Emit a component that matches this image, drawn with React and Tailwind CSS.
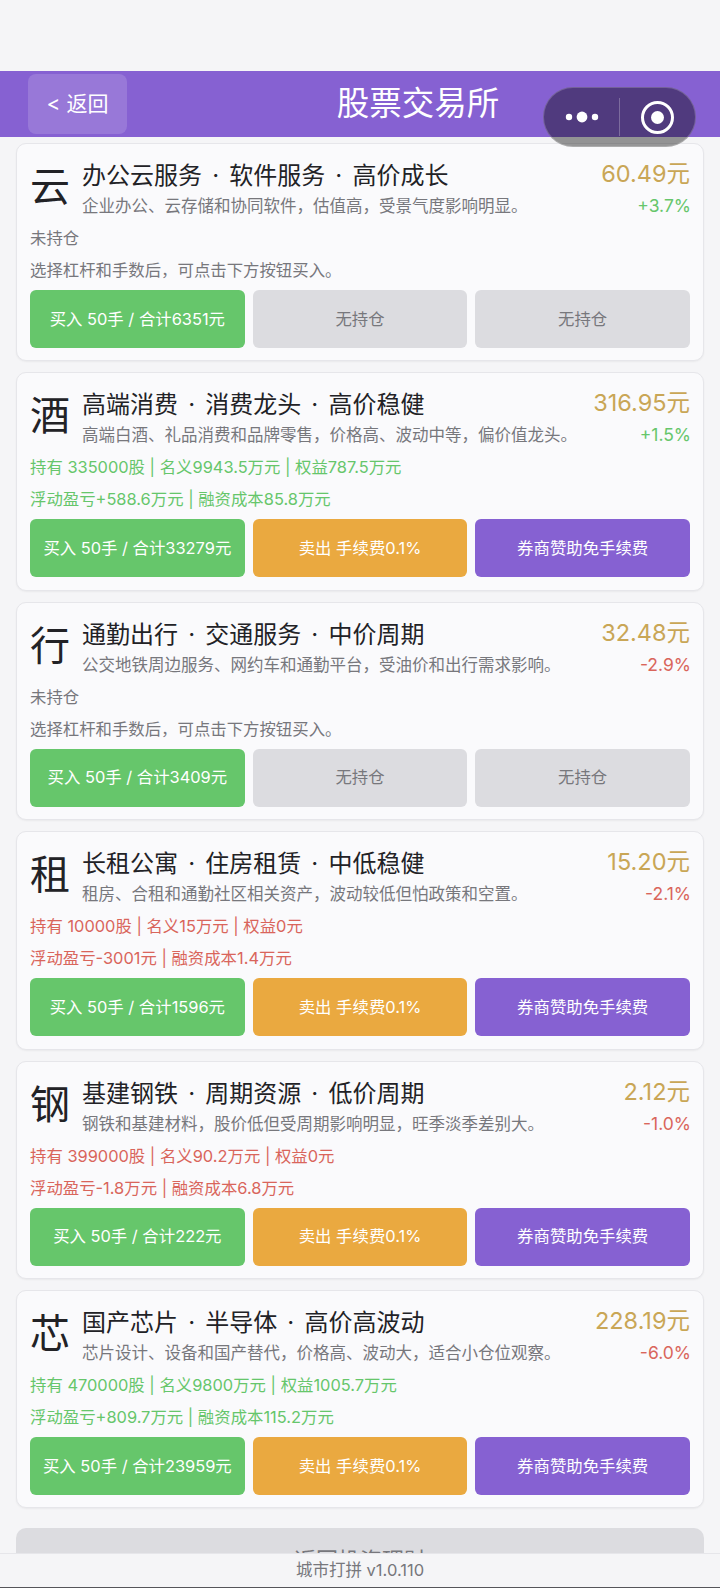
// Stock exchange page: header, stock cards, footer bar

const FONT = "font-['Inter','Noto_Sans_CJK_SC',sans-serif]";

const STOCKS = [
  {
    char: '云',
    title: '办公云服务 · 软件服务 · 高价成长',
    desc: '企业办公、云存储和协同软件，估值高，受景气度影响明显。',
    price: '60.49元',
    pct: '+3.7%',
    up: true,
    buy: '买入 50手 / 合计6351元',
  },
  {
    char: '酒',
    title: '高端消费 · 消费龙头 · 高价稳健',
    desc: '高端白酒、礼品消费和品牌零售，价格高、波动中等，偏价值龙头。',
    price: '316.95元',
    pct: '+1.5%',
    up: true,
    buy: '买入 50手 / 合计33279元',
    hold: ['持有 335000股 | 名义9943.5万元 | 权益787.5万元', '浮动盈亏+588.6万元 | 融资成本85.8万元'],
    gain: true,
  },
  {
    char: '行',
    title: '通勤出行 · 交通服务 · 中价周期',
    desc: '公交地铁周边服务、网约车和通勤平台，受油价和出行需求影响。',
    price: '32.48元',
    pct: '-2.9%',
    up: false,
    buy: '买入 50手 / 合计3409元',
  },
  {
    char: '租',
    title: '长租公寓 · 住房租赁 · 中低稳健',
    desc: '租房、合租和通勤社区相关资产，波动较低但怕政策和空置。',
    price: '15.20元',
    pct: '-2.1%',
    up: false,
    buy: '买入 50手 / 合计1596元',
    hold: ['持有 10000股 | 名义15万元 | 权益0元', '浮动盈亏-3001元 | 融资成本1.4万元'],
    gain: false,
  },
  {
    char: '钢',
    title: '基建钢铁 · 周期资源 · 低价周期',
    desc: '钢铁和基建材料，股价低但受周期影响明显，旺季淡季差别大。',
    price: '2.12元',
    pct: '-1.0%',
    up: false,
    buy: '买入 50手 / 合计222元',
    hold: ['持有 399000股 | 名义90.2万元 | 权益0元', '浮动盈亏-1.8万元 | 融资成本6.8万元'],
    gain: false,
  },
  {
    char: '芯',
    title: '国产芯片 · 半导体 · 高价高波动',
    desc: '芯片设计、设备和国产替代，价格高、波动大，适合小仓位观察。',
    price: '228.19元',
    pct: '-6.0%',
    up: false,
    buy: '买入 50手 / 合计23959元',
    hold: ['持有 470000股 | 名义9800万元 | 权益1005.7万元', '浮动盈亏+809.7万元 | 融资成本115.2万元'],
    gain: true,
  },
];

function ActionButton({ className, children }) {
  return (
    <div className={`h-[58px] flex-1 rounded-[6px] flex items-center justify-center text-[16.4px] ${className}`}>
      {children}
    </div>
  );
}

function StockCard({ stock }) {
  const holding = Boolean(stock.hold);
  const lines = holding
    ? stock.hold
    : ['未持仓', '选择杠杆和手数后，可点击下方按钮买入。'];
  const lineColor = !holding ? 'text-[#77777c]' : stock.gain ? 'text-[#66c66b]' : 'text-[#d9655b]';

  return (
    <div className="h-[218.4px] rounded-[10px] border border-[#e6e6ea] bg-[#fafafc] px-[13px] pt-[15px] shadow-[0_1px_2px_rgba(0,0,0,0.05)]">
      <div className="flex h-[63px]">
        <div className="w-[52px] shrink-0 text-[40px] leading-[56px] text-[#222226]">{stock.char}</div>
        <div className="min-w-0 flex-1">
          <div className="text-[24px] leading-[34px] text-[#222226] [word-spacing:3.4px]">{stock.title}</div>
          <div className="text-[16.5px] leading-[26px] text-[#77777c] whitespace-nowrap">{stock.desc}</div>
        </div>
        <div className="shrink-0 text-right">
          <div className="pb-[4px] text-[23.5px] leading-[30px] text-[#c9a656]">{stock.price}</div>
          <div className={`-mr-px text-[17.5px] leading-[26px] ${stock.up ? 'text-[#66c66b]' : 'text-[#d9655b]'}`}>{stock.pct}</div>
        </div>
      </div>
      <div className={`text-[16.4px] leading-[32px] ${lineColor}`}>
        {lines.map((line) => (
          <div key={line}>{line}</div>
        ))}
      </div>
      <div className="mt-[4px] flex gap-[8px]">
        <ActionButton className="bg-[#66c66b] text-white">{stock.buy}</ActionButton>
        {holding ? (
          <>
            <ActionButton className="bg-[#eaa940] text-white">卖出 手续费0.1%</ActionButton>
            <ActionButton className="bg-[#8661d2] text-white">券商赞助免手续费</ActionButton>
          </>
        ) : (
          <>
            <ActionButton className="bg-[#dcdce0] text-[#77777c]">无持仓</ActionButton>
            <ActionButton className="bg-[#dcdce0] text-[#77777c]">无持仓</ActionButton>
          </>
        )}
      </div>
    </div>
  );
}

export default function App() {
  return (
    <div className={`relative h-[1588px] w-[720px] overflow-hidden bg-[#f5f5f7] ${FONT}`}>
      <div className="h-[71px]" />
      <div className="flex h-[66px] items-center bg-[#8661d2] pl-[28px] pr-[11px]">
        <div className="flex h-[60px] w-[99px] items-center justify-center rounded-[8px] bg-white/15 text-[21px] text-white">
          &lt; 返回
        </div>
        <div className="flex-1 text-center text-[32.5px] leading-[46px] text-white">股票交易所</div>
      </div>

      <div className="flex flex-col gap-[11px] px-[16px] pt-[6px]">
        {STOCKS.map((stock) => (
          <StockCard key={stock.char} stock={stock} />
        ))}
        <div className="mt-[9px] flex h-[64px] items-center justify-center rounded-[10px] bg-[#dcdce0] text-[22px] text-[#77777c]">
          返回投资理财
        </div>
      </div>

      {/* wechat capsule */}
      <div className="absolute left-[543px] top-[87px] flex h-[60px] w-[153px] items-center rounded-full border border-white/20 bg-black/40">
        <div className="flex flex-1 items-center justify-center">
          <svg width="36" height="14" viewBox="0 0 36 14" fill="white">
            <circle cx="5" cy="7" r="3.2" />
            <circle cx="18" cy="7" r="5.4" />
            <circle cx="31" cy="7" r="3.2" />
          </svg>
        </div>
        <div className="h-[38px] w-px bg-white/25" />
        <div className="flex flex-1 items-center justify-center">
          <svg width="33" height="33" viewBox="0 0 33 33" fill="none">
            <circle cx="16.5" cy="16.5" r="15" stroke="white" strokeWidth="3" />
            <circle cx="16.5" cy="16.5" r="6.5" fill="white" />
          </svg>
        </div>
      </div>

      <div className="absolute bottom-0 left-0 right-0 flex h-[35px] items-center justify-center border-t border-b border-t-[#e6e6ea] border-b-[#55555a] bg-[#f5f5f7] text-[16.5px] text-[#77777c]">
        城市打拼 v1.0.110
      </div>
    </div>
  );
}
